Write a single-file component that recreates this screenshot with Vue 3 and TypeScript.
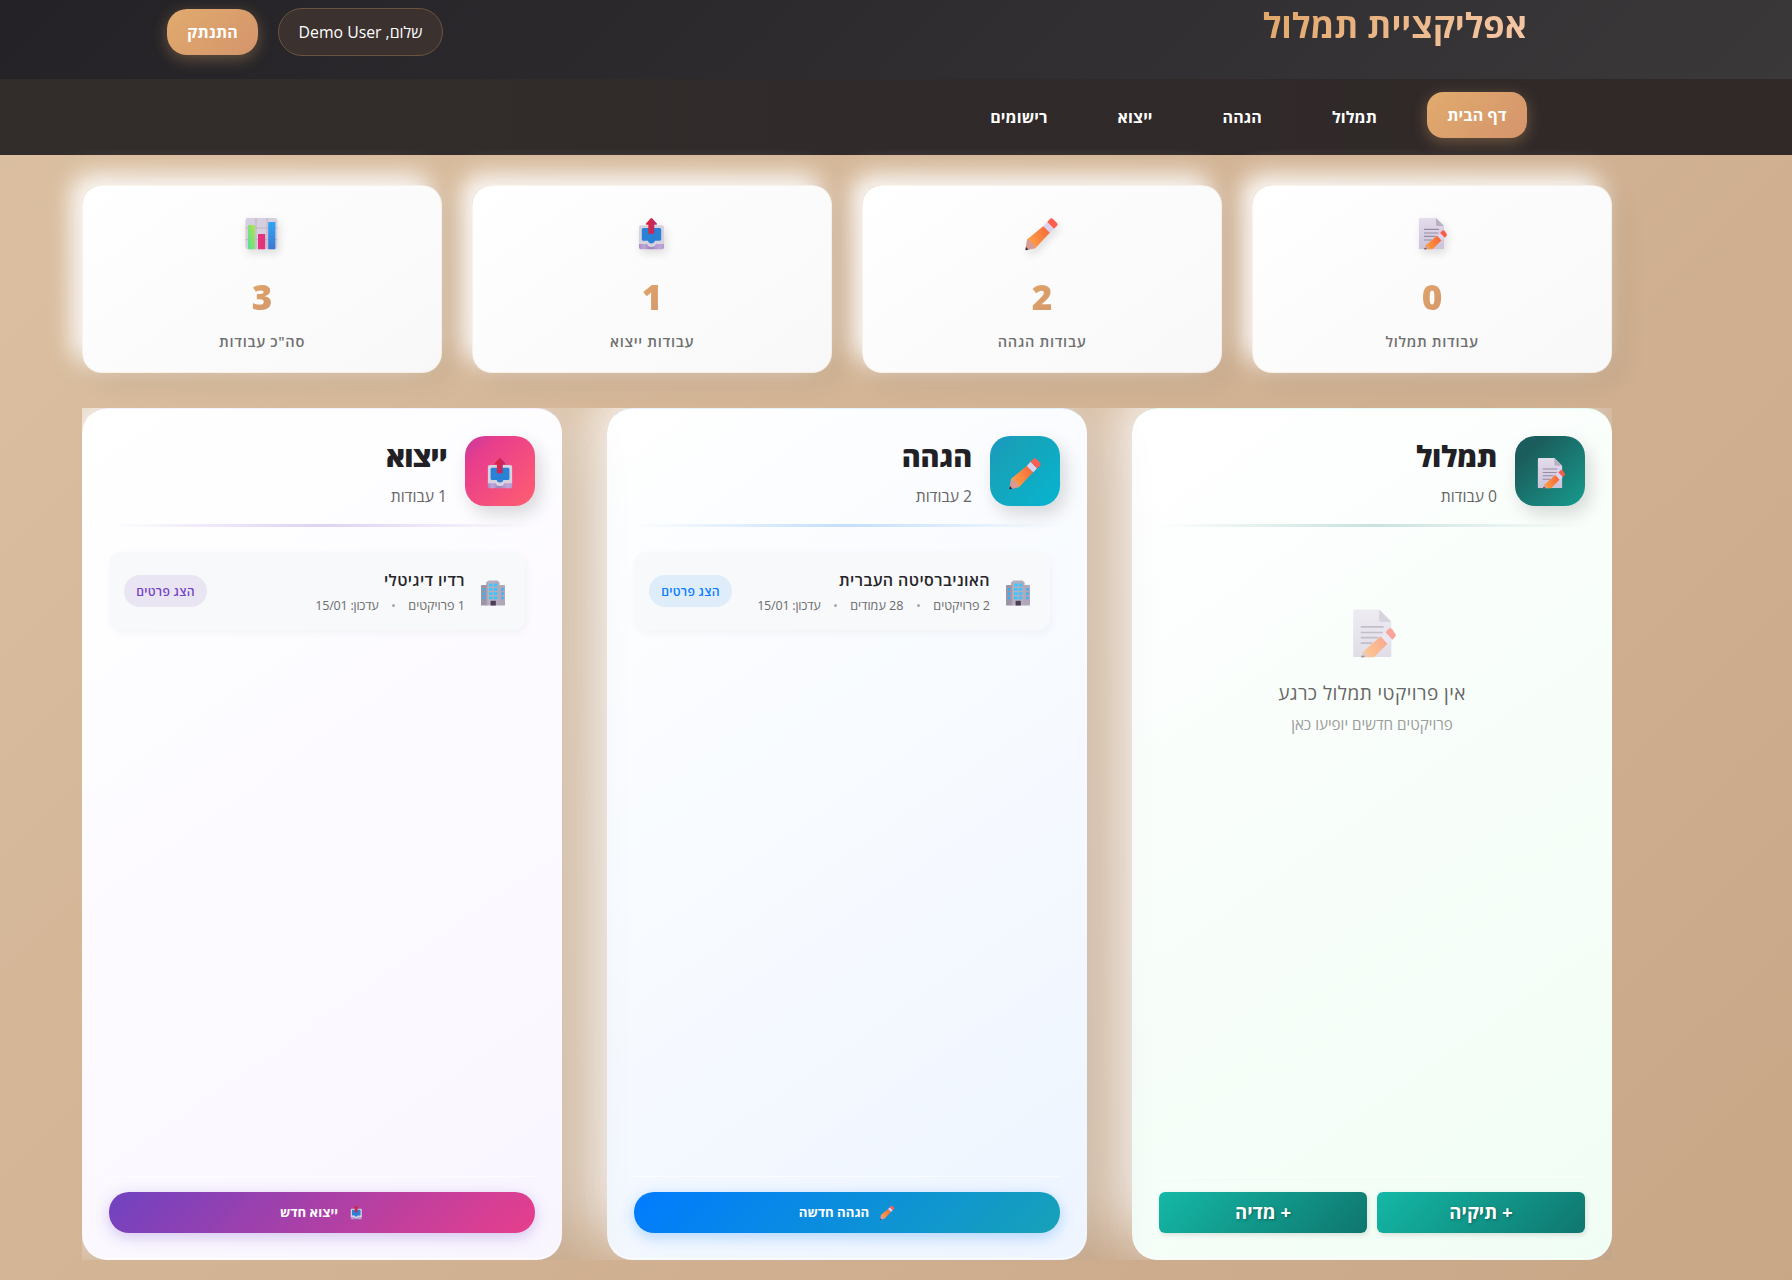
<script setup lang="ts">
interface Stat { icon: string; value: number; label: string }
interface Job { title: string; meta: string[]; updated: string }
interface Action { label: string; icon?: string }
interface Column { key: string; icon: string; title: string; count: number; jobs: Job[]; actions: Action[] }

const nav: string[] = ['דף הבית', 'תמלול', 'הגהה', 'ייצוא', 'רישומים']

const stats: Stat[] = [
  { icon: 'memo', value: 0, label: 'עבודות תמלול' },
  { icon: 'pencil', value: 2, label: 'עבודות הגהה' },
  { icon: 'outbox', value: 1, label: 'עבודות ייצוא' },
  { icon: 'chart', value: 3, label: 'סה"כ עבודות' },
]

const columns: Column[] = [
  {
    key: 'green', icon: 'memo', title: 'תמלול', count: 0, jobs: [],
    actions: [{ label: '+ תיקיה' }, { label: '+ מדיה' }],
  },
  {
    key: 'blue', icon: 'pencil', title: 'הגהה', count: 2,
    jobs: [{ title: 'האוניברסיטה העברית', meta: ['2 פרויקטים', '28 עמודים'], updated: 'עדכון: 15/01' }],
    actions: [{ label: 'הגהה חדשה', icon: 'pencil' }],
  },
  {
    key: 'purple', icon: 'outbox', title: 'ייצוא', count: 1,
    jobs: [{ title: 'רדיו דיגיטלי', meta: ['1 פרויקטים'], updated: 'עדכון: 15/01' }],
    actions: [{ label: 'ייצוא חדש', icon: 'outbox' }],
  },
]
</script>

<template>
  <div class="page" dir="rtl">
    <svg class="defs" width="0" height="0" aria-hidden="true">
      <defs>
        <linearGradient id="paper" x1="0" y1="0" x2="0" y2="1">
          <stop offset="0" stop-color="#e3dceb" /><stop offset="1" stop-color="#cdc3da" />
        </linearGradient>
        <linearGradient id="wood" gradientUnits="userSpaceOnUse" x1="4" y1="24" x2="26" y2="13">
          <stop offset="0" stop-color="#ff9f45" /><stop offset="1" stop-color="#f4663c" />
        </linearGradient>
        <linearGradient id="woodSmall" gradientUnits="userSpaceOnUse" x1="12" y1="30" x2="26" y2="22">
          <stop offset="0" stop-color="#ff9a3c" /><stop offset="1" stop-color="#f8663a" />
        </linearGradient>
        <linearGradient id="arrow" x1="0" y1="0" x2="1" y2="0">
          <stop offset="0" stop-color="#e3242f" /><stop offset="1" stop-color="#b52a78" />
        </linearGradient>
        <linearGradient id="barGreen" x1="1" y1="0" x2="0" y2="1">
          <stop offset="0" stop-color="#b4e34f" /><stop offset="1" stop-color="#55e092" />
        </linearGradient>
        <linearGradient id="barBlue" x1="0" y1="0" x2="0" y2="1">
          <stop offset="0" stop-color="#2fa5f5" /><stop offset="1" stop-color="#3f78cf" />
        </linearGradient>
        <linearGradient id="tower" x1="0" y1="0" x2="1" y2="0">
          <stop offset="0" stop-color="#a39cab" /><stop offset=".18" stop-color="#b9b2c0" /><stop offset="1" stop-color="#b3a9bb" />
        </linearGradient>
        <linearGradient id="tray" x1="0" y1="0" x2="1" y2="0">
          <stop offset="0" stop-color="#a78fc4" /><stop offset=".2" stop-color="#bfa6da" /><stop offset=".45" stop-color="#9a83b8" /><stop offset=".8" stop-color="#bfa6da" /><stop offset="1" stop-color="#b49ccc" />
        </linearGradient>
        <clipPath id="cut"><rect width="34" height="32.2" /></clipPath>
      </defs>
      <symbol id="pencil" viewBox="0 0 34 34">
        <path d="M18.5 9 25 15.5 10.3 31.2 Q5.5 28.5 2 22.6Z" fill="url(#wood)" />
        <path d="M2 22.6 Q4 22 6.3 25.2 Q9 27 10.3 31.2 L2.6 33 .6 31Z" fill="#d79a94" />
        <path d="M1.1 30 3.4 32.6 .9 33.2 Q.2 33.2 .4 32.4Z" fill="#3a2438" />
        <path d="M22.2 5 29 11.6 25 15.8 18.3 9.2Z" fill="#ddd2ee" />
        <path d="M25 2 Q26.4.6 28 2 L32 6 Q33.2 7.4 32 8.8 L29 11.8 22.2 5Z" fill="#fc5f50" />
      </symbol>
      <symbol id="memo" viewBox="0 0 34 34">
        <g clip-path="url(#cut)">
          <path d="M5 1H21L29 9V31.2Q29 32.2 28 32.2H5Q4 32.2 4 31.2V2Q4 1 5 1Z" fill="url(#paper)" />
          <path d="M21 1 29 9H22.2Q21 9 21 7.8Z" fill="#b9b0c2" />
          <path d="M9 12.4H24M9 16H23.4M9 19.4H20.4M9 23H16.6" stroke="#968ca3" stroke-width="1.1" />
          <path d="M22.4 18.2 26.8 23 16.4 33.4 Q12.6 32.8 10.4 28.8Z" fill="url(#woodSmall)" />
          <path d="M10.4 28.8 Q13.4 28.6 15 33.4L9 34Z" fill="#d9a08e" />
          <path d="M9.4 31.2 11.4 31.2 11.4 33 9 33Z" fill="#5c3a50" />
          <path d="M25.2 15.9 29.7 20.7 26.6 23.6 22 18.6Z" fill="#ddd6f1" />
          <path d="M27.1 13.8Q28.3 12.7 29.5 13.8L31.6 17Q32.4 18 31.4 19L29.7 20.7 25.2 15.9Z" fill="#fb5b4b" />
        </g>
      </symbol>
      <symbol id="outbox" viewBox="0 0 34 34">
        <path d="M4 24H29V30.4Q29 32.2 27.2 32.2H5.8Q4 32.2 4 30.4Z" fill="url(#tray)" />
        <path d="M6 8.3H27Q29 8.3 29 10.3V27H21Q20 30 16.5 30 13 30 12 27H4V10.3Q4 8.3 6 8.3Z" fill="#d8d2e0" />
        <path d="M8.4 11H24.6Q26.2 11 26.2 12.6V22.2Q26.2 23.8 24.6 23.8H20Q19.4 26.4 16.5 26.4 13.6 26.4 13 23.8H8.4Q6.8 23.8 6.8 22.2V12.6Q6.8 11 8.4 11Z" fill="#2a82d6" />
        <path d="M15.5 1.5Q16.4.6 17.3 1.5L21.8 6.4Q22.4 7.6 21.2 7.8H19.3V16.8H13.3V7.8H11.6Q10.4 7.6 11 6.4Z" fill="url(#arrow)" />
      </symbol>
      <symbol id="chart" viewBox="0 0 34 34">
        <rect x=".4" y="1" width="32" height="31.2" rx="2.4" fill="#d6cfe0" />
        <path d="M11 1V32M22 1V32M.4 11H32.4M.4 22.6H32.4" stroke="#bfb6cb" stroke-width="1.1" />
        <rect x="3" y="8" width="7" height="24.2" rx=".6" fill="url(#barGreen)" />
        <rect x="13" y="17" width="7.2" height="15.2" rx=".6" fill="#e3337a" />
        <rect x="23.2" y="5" width="7.2" height="27.2" rx=".6" fill="url(#barBlue)" />
      </symbol>
      <symbol id="building" viewBox="0 0 26 26">
        <path d="M1 6Q1 5 2 5H7V25.5H1Z" fill="#9d95a6" />
        <path d="M19 5H24Q25 5 25 6V25.5H19Z" fill="#b0a7b8" />
        <path d="M6.2 2.4 8.4.5H17.4L19.6 2.4V25.5H6.2Z" fill="url(#tower)" />
        <path d="M9 3.6H12.6V6.4H9ZM13.8 3.6H17.4V6.4H13.8ZM9 7.9H12.6V10.7H9ZM13.8 7.9H17.4V10.7H13.8ZM9 12.2H12.6V15H9ZM13.8 12.2H17.4V15H13.8ZM9 16.4H12.6V19.2H9ZM13.8 16.4H17.4V19.2H13.8Z" fill="#3cc4ff" />
        <path d="M2.8 8H5V10.8H2.8ZM2.8 12.2H5V15H2.8ZM2.8 16.4H5V19.2H2.8ZM21.4 8H23.6V10.8H21.4ZM21.4 12.2H23.6V15H21.4ZM21.4 16.4H23.6V19.2H21.4Z" fill="#2fb4fa" />
        <rect x="10.6" y="20.8" width="5.2" height="4.7" fill="#4a3d57" />
      </symbol>
    </svg>

    <header class="header">
      <div class="wrap">
        <h1 class="brand">אפליקציית תמלול</h1>
        <div class="account">
          <span class="user">שלום, Demo User</span>
          <button class="logout">התנתק</button>
        </div>
      </div>
    </header>

    <nav class="nav">
      <div class="wrap nav-items">
        <a v-for="(item, i) in nav" :key="item" class="nav-link" :class="{ active: i === 0 }">{{ item }}</a>
      </div>
    </nav>

    <main class="main">
      <section class="stats">
        <div v-for="s in stats" :key="s.label" class="stat">
          <svg class="stat-icon"><use :href="'#' + s.icon" /></svg>
          <div class="stat-value">{{ s.value }}</div>
          <div class="stat-label">{{ s.label }}</div>
        </div>
      </section>

      <section class="columns">
        <article v-for="c in columns" :key="c.key" class="column" :class="c.key">
          <div class="col-head">
            <div class="col-icon"><svg><use :href="'#' + c.icon" /></svg></div>
            <div class="col-text">
              <h2>{{ c.title }}</h2>
              <p>{{ c.count }} עבודות</p>
            </div>
          </div>
          <div class="rule"></div>

          <div class="col-body">
            <div v-for="j in c.jobs" :key="j.title" class="job">
              <svg class="job-icon"><use href="#building" /></svg>
              <div class="job-text">
                <div class="job-title">{{ j.title }}</div>
                <div class="job-meta">
                  <template v-for="m in j.meta" :key="m">
                    <span>{{ m }}</span><i></i>
                  </template>
                  <span class="date">{{ j.updated }}</span>
                </div>
              </div>
              <button class="details">הצג פרטים</button>
            </div>
            <div v-if="!c.jobs.length" class="empty">
              <svg><use href="#memo" /></svg>
              <div class="empty-title">אין פרויקטי תמלול כרגע</div>
              <div class="empty-sub">פרויקטים חדשים יופיעו כאן</div>
            </div>
          </div>

          <div class="col-foot">
            <button v-for="a in c.actions" :key="a.label" class="action">
              <svg v-if="a.icon"><use :href="'#' + a.icon" /></svg>
              <span>{{ a.label }}</span>
            </button>
          </div>
        </article>
      </section>
    </main>
  </div>
</template>

<style>
body { margin: 0; overflow: hidden; }
</style>

<style scoped>
.page {
  box-sizing: border-box;
  width: 1792px;
  height: 1280px;
  overflow: hidden;
  font-family: "Open Sans", "Liberation Sans", sans-serif;
  background: linear-gradient(135deg, #dbc0a1 0%, #d2b394 50%, #c8a787 100%);
}
.page * { box-sizing: border-box; }
.defs { position: absolute; }
h1, h2, p { margin: 0; }
button { font-family: inherit; border: 0; padding: 0; }

.header {
  height: 79px;
  background: linear-gradient(135deg, #242226 0%, #2d2b2e 45%, #3a3839 100%);
}
.wrap {
  width: 1360px;
  margin-right: 265px;
  display: flex;
}
.header .wrap { justify-content: space-between; align-items: flex-start; }
.brand {
  font-size: 34.4px;
  line-height: 49px;
  font-weight: 700;
  background: linear-gradient(135deg, #e0a566 0%, #f7c9a9 100%);
  -webkit-background-clip: text;
  background-clip: text;
  color: transparent;
}
.account { display: flex; align-items: center; gap: 20px; margin-top: 8px; }
.user {
  width: 165px;
  height: 48px;
  line-height: 46px;
  text-align: center;
  border: 1px solid #6b543f;
  border-radius: 25px;
  background: #3b312f;
  color: #fff;
  font-size: 15.8px;
}
.logout {
  width: 91px;
  height: 46px;
  border-radius: 20px;
  color: #fff;
  font-size: 16px;
  font-weight: 700;
  letter-spacing: .2px;
  background: linear-gradient(135deg, #e1ab6d, #d4946c);
  box-shadow: 0 4px 15px rgba(224, 168, 106, .35);
}

.nav { height: 76px; background: linear-gradient(90deg, #322d2b, #312a2a 50%, #302928); }
.nav-items { gap: 30px; align-items: flex-start; padding-top: 13px; }
.nav-link {
  height: 46px;
  line-height: 50px;
  padding: 0 20px;
  color: #fff;
  font-size: 16px;
  font-weight: 700;
  letter-spacing: .1px;
}
.nav-link.active {
  width: 100px;
  line-height: 46px;
  text-align: center;
  white-space: nowrap;
  border-radius: 16px;
  background: linear-gradient(135deg, #e1ab6d, #d4946c);
  box-shadow: 0 4px 15px rgba(224, 168, 106, .35);
}

.main { width: 1530px; margin-right: 180px; padding-top: 30px; height: 1125px; }
.stats { display: flex; gap: 30px; }
.stat {
  width: 360px;
  height: 188px;
  border: 1px solid rgba(224, 168, 106, .12);
  border-radius: 20px;
  display: flex;
  flex-direction: column;
  align-items: center;
  padding-top: 31px;
  background: linear-gradient(145deg, #fff, #f8f8f8) border-box;
  box-shadow: 10px 10px 30px rgba(0, 0, 0, .06), -10px -10px 24px rgba(255, 255, 255, .98);
}
.stat-icon { width: 34px; height: 34px; filter: drop-shadow(2px 4px 4px rgba(0, 0, 0, .12)); }
.stat-value {
  margin-top: 21px;
  font-size: 35.2px;
  line-height: 48px;
  font-weight: 800;
  background: linear-gradient(135deg, #e0a86a, #d4956b);
  -webkit-background-clip: text;
  background-clip: text;
  color: transparent;
}
.stat-label { margin-top: 10px; font-size: 14.6px; line-height: 22px; font-weight: 600; letter-spacing: .7px; color: #707070; }

.columns {
  display: flex;
  gap: 45px;
  margin-top: 35px;
  height: 852px;
  overflow: hidden;
}
.column {
  width: 480px;
  height: 852px;
  border-radius: 25px;
  border: 1px solid transparent;
  padding: 27px 26px 26px;
  display: flex;
  flex-direction: column;
  box-shadow: 20px 20px 60px rgba(0, 0, 0, .07), -20px -20px 60px rgba(255, 255, 255, .92), inset 0 -1px 0 rgba(255, 255, 255, .8);
}
.green { background: linear-gradient(145deg, #fff, #f0fdf4) border-box; border-top-color: rgba(187, 247, 208, .35); }
.blue { background: linear-gradient(145deg, #fff, #eef5ff) border-box; border-top-color: rgba(191, 219, 254, .35); }
.purple { background: linear-gradient(145deg, #fff, #f9f5ff) border-box; border-top-color: rgba(233, 213, 255, .35); }

.col-head { display: flex; gap: 18px; height: 88px; align-items: flex-start; }
.col-icon {
  width: 70px;
  height: 70px;
  border-radius: 20px;
  display: flex;
  align-items: center;
  justify-content: center;
  padding-top: 4px;
  box-shadow: 5px 8px 18px rgba(0, 0, 0, .15);
}
.col-icon svg { width: 33px; height: 33px; }
.green .col-icon { background: linear-gradient(135deg, #1b5d5c 20%, #179b8e); }
.blue .col-icon { background: linear-gradient(135deg, #1a96c8, #17a2b8 25%, #07b4d0); }
.purple .col-icon { background: linear-gradient(135deg, #c63a9e, #e83e8c 25%, #ff5f70); }
.col-text h2 { font-size: 28.8px; line-height: 40px; font-weight: 800; color: #212024; letter-spacing: -.1px; }
.purple .col-text h2 { letter-spacing: -.7px; }
.col-text p { font-size: 15.7px; line-height: 24px; font-weight: 500; color: #666; margin-top: 8px; }

.rule { height: 3px; flex: none; }
.green .rule { background: linear-gradient(90deg, rgba(201, 226, 223, 0), #c9e2df, rgba(201, 226, 223, 0)); }
.blue .rule { background: linear-gradient(90deg, rgba(196, 223, 252, 0), #c4dffc, rgba(196, 223, 252, 0)); }
.purple .rule { background: linear-gradient(90deg, rgba(223, 210, 242, 0), #dfd2f2, rgba(223, 210, 242, 0)); }

.col-body { flex: 1; margin-top: 25px; }
.job {
  width: 416px;
  height: 78px;
  margin-right: 10px;
  padding: 0 19px 0 15px;
  display: flex;
  align-items: center;
  border-radius: 12px;
  background: #f8f9fb;
  box-shadow: 2px 3px 8px rgba(0, 0, 0, .04);
}
.job-icon { width: 26px; height: 26px; flex: none; margin-top: 3px; }
.job-text { flex: 1; margin-right: 15px; padding-top: 1px; }
.job-title { font-size: 16px; line-height: 22px; font-weight: 600; letter-spacing: .42px; color: #252428; }
.job-meta {
  display: flex;
  align-items: center;
  gap: 13.4px;
  margin-top: 6px;
  font-size: 12.6px;
  line-height: 18px;
  color: #6b6b6b;
}
.job-meta i { width: 3px; height: 3px; border-radius: 50%; background: #a8a8aa; }
.date { letter-spacing: -.25px; }
.details {
  width: 83px;
  height: 32px;
  border-radius: 16px;
  font-size: 12.2px;
  font-weight: 600;
  letter-spacing: .3px;
  white-space: nowrap;
}
.blue .details { background: #dfecf9; color: #087cff; }
.purple .details { background: #e9e5f3; color: #7443c4; }

.empty { display: flex; flex-direction: column; align-items: center; padding-top: 56px; }
.empty svg { width: 52px; height: 52px; opacity: .55; position: relative; right: -1px; }
.empty-title { margin-top: 19px; font-size: 19px; line-height: 28px; font-weight: 500; letter-spacing: .45px; color: #666; }
.empty-sub { margin-top: 7px; font-size: 15.2px; line-height: 20px; color: #9c9c9c; }

.col-foot { display: flex; gap: 10px; border-top: 1px solid rgba(255, 255, 255, .6); padding-top: 15px; }
.action {
  flex: 1;
  height: 41px;
  display: flex;
  align-items: center;
  justify-content: center;
  gap: 11px;
  border-radius: 20px;
  color: #fff;
  font-size: 13.2px;
  font-weight: 700;
}
.action svg { width: 15px; height: 15px; }
.action span { position: relative; top: -1px; }
.green .action {
  border-radius: 6px;
  font-size: 18.6px;
  font-weight: 700;
  text-shadow: 1px 1px 3px rgba(0, 0, 0, .35);
  background: linear-gradient(135deg, #14b8a6, #0f766e);
  box-shadow: 1px 2px 5px rgba(0, 0, 0, .12);
}
.blue .action { background: linear-gradient(135deg, #007bff, #17a2b8); box-shadow: 0 4px 15px rgba(0, 123, 255, .28); }
.purple .action { background: linear-gradient(135deg, #6f42c1, #e83e8c); box-shadow: 0 4px 15px rgba(111, 66, 193, .28); }
</style>
